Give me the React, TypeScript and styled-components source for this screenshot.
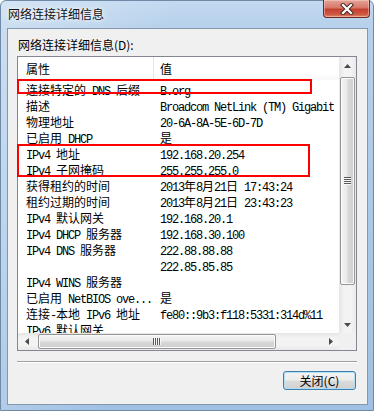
import React from 'react';
import styled, { createGlobalStyle } from 'styled-components';

const CJK = '"Noto Sans CJK SC", "Noto Sans", sans-serif';
const MONO = '"Liberation Mono", "DejaVu Sans Mono", monospace';

const GlobalStyle = createGlobalStyle`
  html, body {
    margin: 0;
    padding: 0;
    background: #fff;
  }
  body {
    width: 374px;
    height: 411px;
    overflow: hidden;
    font-family: ${CJK};
  }
`;

const rows: [string, string][] = [
  ['连接特定的 DNS 后缀', 'B.org'],
  ['描述', 'Broadcom NetLink (TM) Gigabit Ethernet'],
  ['物理地址', '20-6A-8A-5E-6D-7D'],
  ['已启用 DHCP', '是'],
  ['IPv4 地址', '192.168.20.254'],
  ['IPv4 子网掩码', '255.255.255.0'],
  ['获得租约的时间', '2013年8月21日 17:43:24'],
  ['租约过期的时间', '2013年8月21日 23:43:23'],
  ['IPv4 默认网关', '192.168.20.1'],
  ['IPv4 DHCP 服务器', '192.168.30.100'],
  ['IPv4 DNS 服务器', '222.88.88.88'],
  ['', '222.85.85.85'],
  ['IPv4 WINS 服务器', ''],
  ['已启用 NetBIOS ove...', '是'],
  ['连接-本地 IPv6 地址', 'fe80::9b3:f118:5331:314d%11'],
  ['IPv6 默认网关', ''],
];

const HAN = /[\u2E80-\u9FFF\u3000-\u303F\uFF00-\uFFEF]/;

// list text mixes 12px han with 6px-wide latin, like the old SimSun
const Mixed = ({ text }: { text: string }) => (
  <>
    {text
      .split(/([\u2E80-\u9FFF\u3000-\u303F\uFF00-\uFFEF]+)/)
      .filter(Boolean)
      .map((part, i) =>
        HAN.test(part) ? <Han key={i}>{part}</Han> : <Latin key={i}>{part}</Latin>
      )}
  </>
);

export default function App() {
  return (
    <>
      <GlobalStyle />
      <Window>
        <TitleBar>
          <TitleText>网络连接详细信息</TitleText>
          <CloseBox>
            <svg width="14" height="12" viewBox="0 0 14 12">
              <path d="M3 2 L11 10 M11 2 L3 10" stroke="#4a2a28" strokeWidth="4.2" strokeLinecap="square" />
              <path d="M3 2 L11 10 M11 2 L3 10" stroke="#fff" strokeWidth="2.2" strokeLinecap="square" />
            </svg>
          </CloseBox>
        </TitleBar>
        <Client>
          <Label>网络连接详细信息(D):</Label>
          <List>
            <Viewport>
              <Header>
                <HeaderCell $first>属性</HeaderCell>
                <HeaderCell>值</HeaderCell>
              </Header>
              {rows.map(([name, value], i) => (
                <Row key={i}>
                  <NameCell>
                    <Mixed text={name} />
                  </NameCell>
                  <ValueCell>
                    <Mixed text={value} />
                  </ValueCell>
                </Row>
              ))}
            </Viewport>
            <VScroll>
              <ArrowButton>
                <svg width="7" height="4" viewBox="0 0 7 4">
                  <polygon points="0,4 3.5,0 7,4" fill="#4a4a4a" />
                </svg>
              </ArrowButton>
              <Track $vertical>
                <Thumb $vertical>
                  <Grip $vertical />
                </Thumb>
              </Track>
              <ArrowButton>
                <svg width="7" height="4" viewBox="0 0 7 4">
                  <polygon points="0,0 7,0 3.5,4" fill="#4a4a4a" />
                </svg>
              </ArrowButton>
            </VScroll>
            <HScroll>
              <ArrowButton>
                <svg width="4" height="7" viewBox="0 0 4 7">
                  <polygon points="4,0 4,7 0,3.5" fill="#4a4a4a" />
                </svg>
              </ArrowButton>
              <Track>
                <Thumb>
                  <Grip />
                </Thumb>
              </Track>
              <ArrowButton>
                <svg width="4" height="7" viewBox="0 0 4 7">
                  <polygon points="0,0 4,3.5 0,7" fill="#4a4a4a" />
                </svg>
              </ArrowButton>
            </HScroll>
            <Corner />
            <Mark $top={22} $width={295} $height={15} />
            <Mark $top={87} $width={293} $height={33} />
          </List>
          <Separator />
          <ButtonRow>
            <PushButton>关闭(C)</PushButton>
          </ButtonRow>
        </Client>
      </Window>
    </>
  );
}

const Window = styled.div`
  width: 374px;
  height: 411px;
  box-sizing: border-box;
  display: flex;
  flex-direction: column;
  padding: 0 5px 5px 6px;
  border: 1px solid #6f8aa6;
  border-radius: 6px 6px 0 0;
  background:
    linear-gradient(100deg, rgba(255, 255, 255, 0.3) 0%, rgba(255, 255, 255, 0) 40%),
    linear-gradient(180deg, #c2d9f0 0%, #b6d0eb 28px, #a8c7e7 60%, #a0c0e3 100%);
`;

const TitleBar = styled.div`
  height: 27px;
  display: flex;
  justify-content: space-between;
  align-items: flex-start;
`;

const TitleText = styled.div`
  padding-left: 1px;
  font-family: ${CJK};
  font-size: 12px;
  line-height: 25px;
  color: #111;
  text-shadow: 0 0 6px rgba(255, 255, 255, 0.95), 0 0 3px rgba(255, 255, 255, 0.9);
`;

const CloseBox = styled.div`
  width: 47px;
  height: 18px;
  margin-top: -1px;
  margin-right: -2px;
  box-sizing: border-box;
  display: flex;
  align-items: center;
  justify-content: center;
  border: 1px solid #6d2a25;
  border-top: none;
  border-radius: 0 0 4px 4px;
  background: linear-gradient(180deg, #e4a598 0%, #d7776a 45%, #c2402f 55%, #cf5a44 85%, #dd8a6e 100%);
  box-shadow: inset 0 0 0 1px rgba(255, 220, 210, 0.45);
`;

const Client = styled.div`
  flex: 1;
  display: flex;
  flex-direction: column;
  padding: 9px 10px 0 9px;
  border: 1px solid #8397ad;
  background: #f0f0f0;
`;

const Label = styled.div`
  margin: 0 0 4px 1px;
  font-family: ${CJK};
  font-size: 12px;
  line-height: 14px;
  color: #000;
`;

const List = styled.div`
  position: relative;
  width: 340px;
  height: 295px;
  box-sizing: border-box;
  border: 1px solid #828790;
  background: #fff;
  display: grid;
  grid-template-columns: 1fr 17px;
  grid-template-rows: 1fr 17px;
`;

const Viewport = styled.div`
  overflow: hidden;
  min-width: 0;
  min-height: 0;
`;

const Header = styled.div`
  height: 23px;
  display: grid;
  grid-template-columns: 136px 1fr;
  background: linear-gradient(180deg, #ffffff 0%, #ffffff 70%, #f7f8f9 100%);
`;

const HeaderCell = styled.div<{ $first?: boolean }>`
  box-sizing: border-box;
  padding-left: ${({ $first }) => ($first ? '8px' : '6px')};
  border-right: ${({ $first }) => ($first ? '1px solid #e5e5e5' : 'none')};
  font-family: ${CJK};
  font-size: 12px;
  line-height: 23px;
  color: #000;
`;

const Row = styled.div`
  height: 16px;
  display: grid;
  grid-template-columns: 136px max-content;
  white-space: nowrap;
  line-height: 16px;
  color: #000;
`;

const NameCell = styled.div`
  padding-left: 8px;
  overflow: hidden;
`;

const ValueCell = styled.div`
  padding-left: 6px;
`;

const Han = styled.span`
  font-family: ${CJK};
  font-size: 12px;
`;

const Latin = styled.span`
  font-family: ${MONO};
  font-size: 12px;
  letter-spacing: -1.2px;
  white-space: pre;
`;

const VScroll = styled.div`
  display: flex;
  flex-direction: column;
  background: linear-gradient(90deg, #e6e6e6 0%, #f3f3f3 30%, #f3f3f3 70%, #e9e9e9 100%);
`;

const HScroll = styled.div`
  display: flex;
  background: linear-gradient(180deg, #e6e6e6 0%, #f3f3f3 30%, #f3f3f3 70%, #e9e9e9 100%);
`;

const ArrowButton = styled.div`
  flex: none;
  width: 17px;
  height: 17px;
  display: flex;
  align-items: center;
  justify-content: center;
`;

const Track = styled.div<{ $vertical?: boolean }>`
  flex: 1;
  display: flex;
  flex-direction: ${({ $vertical }) => ($vertical ? 'column' : 'row')};
  padding: ${({ $vertical }) => ($vertical ? '3px 1px 0 1px' : '1px 0 1px 3px')};
`;

const Thumb = styled.div<{ $vertical?: boolean }>`
  box-sizing: border-box;
  ${({ $vertical }) => ($vertical ? 'height: 208px; width: 15px;' : 'width: 238px; height: 15px;')}
  border: 1px solid #959595;
  border-radius: 2px;
  display: flex;
  align-items: center;
  justify-content: center;
  box-shadow: inset 0 0 0 1px #fafafa;
  background: ${({ $vertical }) =>
    $vertical
      ? 'linear-gradient(90deg, #f4f4f4 0%, #e9e9e9 45%, #d7d7d7 55%, #cfcfcf 100%)'
      : 'linear-gradient(180deg, #f4f4f4 0%, #e9e9e9 45%, #d7d7d7 55%, #cfcfcf 100%)'};
`;

const Grip = styled.span<{ $vertical?: boolean }>`
  display: block;
  ${({ $vertical }) =>
    $vertical
      ? 'width: 7px; height: 8px; background: repeating-linear-gradient(180deg, #595959 0 1px, #f7f7f7 1px 2px);'
      : 'width: 8px; height: 7px; background: repeating-linear-gradient(90deg, #595959 0 1px, #f7f7f7 1px 2px);'}
`;

const Corner = styled.div`
  background: #f0f0f0;
`;

const Mark = styled.div<{ $top: number; $width: number; $height: number }>`
  position: absolute;
  left: -1px;
  top: ${({ $top }) => $top}px;
  width: ${({ $width }) => $width}px;
  height: ${({ $height }) => $height}px;
  box-sizing: border-box;
  border: 2px solid #f00;
  pointer-events: none;
`;

const Separator = styled.div`
  margin-top: 10px;
  height: 0;
  border-top: 1px solid #a0a0a0;
  border-bottom: 1px solid #ffffff;
`;

const ButtonRow = styled.div`
  display: flex;
  justify-content: flex-end;
  margin-top: 8px;
`;

const PushButton = styled.div`
  width: 73px;
  height: 19px;
  margin-right: 1px;
  box-sizing: border-box;
  display: flex;
  align-items: center;
  justify-content: center;
  border: 1px solid #3c7fb1;
  border-radius: 3px;
  background: linear-gradient(180deg, #f4f4f4 0%, #ececec 48%, #dcdcdc 52%, #d0d0d0 100%);
  box-shadow: inset 0 0 0 1px #b4def6;
  font-family: ${CJK};
  font-size: 12px;
  line-height: 17px;
  color: #000;
`;
